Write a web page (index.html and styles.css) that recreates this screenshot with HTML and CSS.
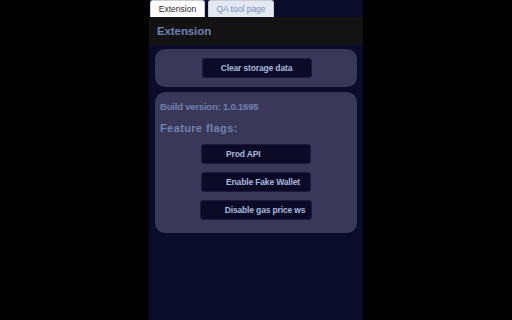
FILE: index.html
```html
<!DOCTYPE html>
<html>
<head>
<meta charset="utf-8">
<link rel="stylesheet" href="styles.css">
</head>
<body>
<div class="panel">
  <div class="tabs">
    <div class="tab active">Extension</div>
    <div class="tab">QA tool page</div>
  </div>
  <div class="header">Extension</div>
  <div class="content">
    <div class="card card-top">
      <button class="btn btn-center">Clear storage data</button>
    </div>
    <div class="card card-flags">
      <div class="build">Build version: 1.0.1695</div>
      <div class="flags-title">Feature flags:</div>
      <div class="flag-list">
        <button class="btn btn-flag">Prod API</button>
        <button class="btn btn-flag">Enable Fake Wallet</button>
        <button class="btn btn-flag">Disable gas price ws</button>
      </div>
    </div>
  </div>
</div>
</body>
</html>
```
FILE: styles.css
```css
html, body {
  margin: 0;
  padding: 0;
  background: #000;
  height: 100%;
}
body {
  font-family: "Liberation Sans", Arial, sans-serif;
}
.panel {
  margin-left: 149px;
  width: 214px;
  height: 320px;
  background: #0b0b2b;
  display: flex;
  flex-direction: column;
}
.tabs {
  display: flex;
  gap: 3px;
  height: 17px;
  padding-left: 1px;
}
.tab {
  height: 17px;
  box-sizing: border-box;
  padding: 3px 0 0 0;
  text-align: center;
  font-size: 8.5px;
  border-radius: 3px 3px 0 0;
  background: #e4e8f0;
  color: #7590bc;
  border: 1px solid #c8ccd6;
  border-bottom: none;
  width: 66px;
}
.tab.active {
  background: #fff;
  color: #2a2a2a;
  width: 55px;
}
.header {
  height: 28px;
  background: #131313;
  color: #6f82b4;
  font-weight: bold;
  font-size: 11.5px;
  padding-left: 8px;
  display: flex;
  align-items: center;
  letter-spacing: -0.1px;
}
.content {
  padding: 4px 6px 0 6px;
  display: flex;
  flex-direction: column;
  gap: 5px;
}
.card {
  background: #3a3858;
  border-radius: 10px;
}
.card-top {
  height: 38px;
  display: flex;
  justify-content: center;
  align-items: center;
}
.btn {
  font-family: "Liberation Sans", Arial, sans-serif;
  font-weight: bold;
  font-size: 8.5px;
  letter-spacing: -0.15px;
  color: #a9b9dc;
  background: #0b0b28;
  border: 1px solid #1c1c3a;
  border-radius: 3px;
  height: 20px;
  width: 110px;
  padding: 0;
  cursor: pointer;
}
.btn-center {
  text-align: center;
  margin-left: 1px;
}
.card-flags {
  height: 141px;
  box-sizing: border-box;
  padding: 9px 0 0 5px;
  color: #6f82b4;
  font-weight: bold;
}
.build {
  font-size: 9.5px;
  height: 12px;
  letter-spacing: -0.2px;
}
.flags-title {
  font-size: 11px;
  margin-top: 9px;
  letter-spacing: 0.4px;
}
.flag-list {
  display: flex;
  flex-direction: column;
  align-items: center;
  gap: 8px;
  margin-top: 10px;
  padding-right: 5px;
}
.btn-flag {
  text-align: left;
  padding-left: 24px;
  min-width: 110px;
  width: auto;
  padding-right: 6px;
}
```
